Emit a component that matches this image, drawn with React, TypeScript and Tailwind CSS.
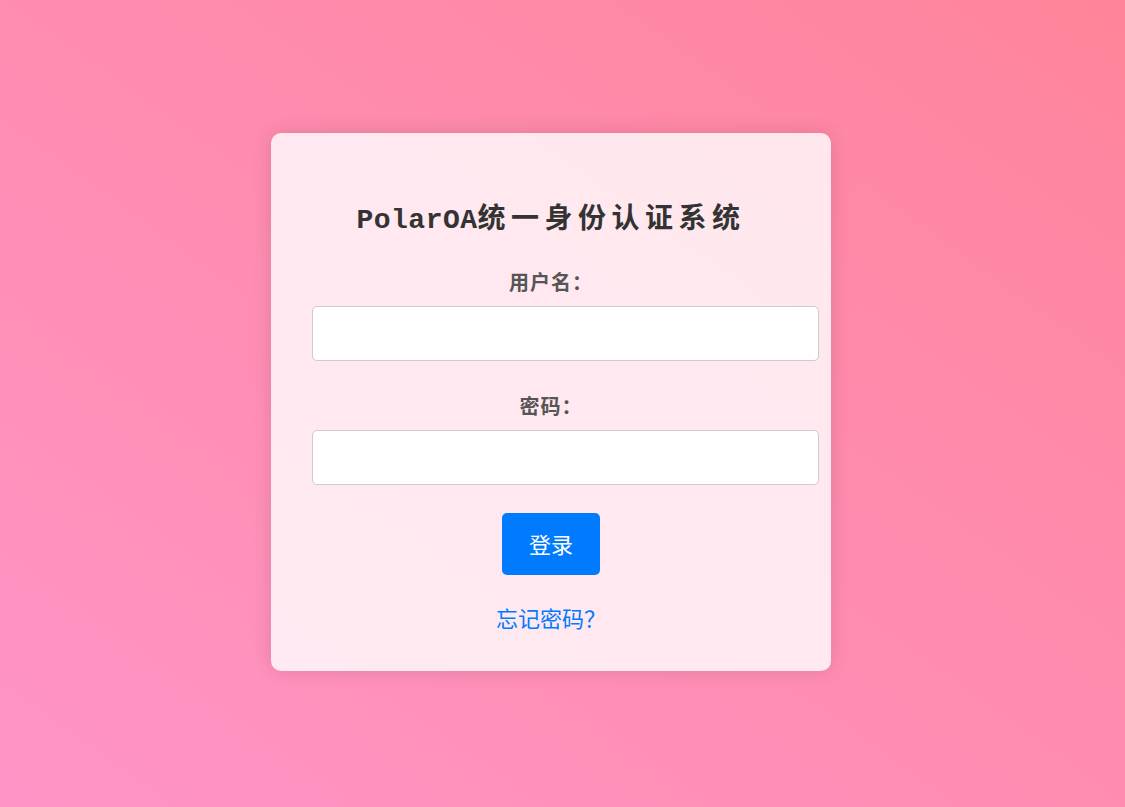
export default function App() {
  return (
    <div className="min-h-screen w-full flex items-center justify-center pr-[23px] pb-[3px] bg-gradient-to-tr from-[#ff94c6] to-[#ff849b] font-['Noto_Sans','Noto_Sans_CJK_SC',sans-serif]">
      <div className="w-[560px] rounded-[10px] bg-white/80 shadow-[0_0_20px_rgba(0,0,0,0.12)] px-[41px] pt-[71px] pb-[38px] flex flex-col items-center">
        <h2 className="text-[28px] leading-[34px] font-bold text-[#333] tracking-[5.5px] text-center font-['Liberation_Mono','Noto_Sans_CJK_SC',monospace]">
          <span className="tracking-[0.5px]">PolarOA</span>统一身份认证系统
        </h2>

        <label className="mt-[31px] text-[20px] leading-[28px] font-bold text-[#555] tracking-[1px]">用户名：</label>
        <input
          type="text"
          className="mt-[9px] w-[507px] h-[55px] self-start rounded-[5px] border border-[#ccc] bg-white px-[15px] outline-none"
        />

        <label className="mt-[32px] text-[20px] leading-[28px] font-bold text-[#555] tracking-[1px]">密码：</label>
        <input
          type="password"
          className="mt-[9px] w-[507px] h-[55px] self-start rounded-[5px] border border-[#ccc] bg-white px-[15px] outline-none"
        />

        <button className="mt-[28px] w-[98px] h-[62px] rounded-[5px] bg-[#007bff] text-white text-[22px]">
          登录
        </button>

        <a href="#" className="mt-[28px] text-[22px] leading-[30px] text-[#007bff]">
          忘记密码？
        </a>
      </div>
    </div>
  )
}
